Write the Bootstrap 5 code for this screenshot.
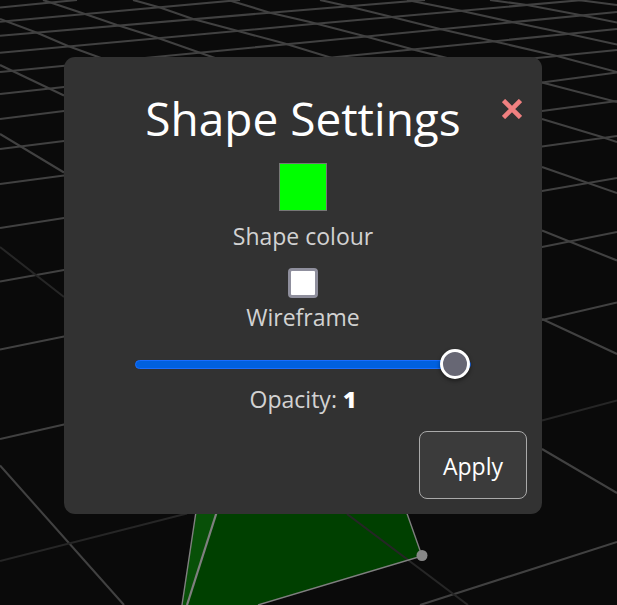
<!DOCTYPE html>
<html lang="en">
<head>
<meta charset="utf-8">
<meta name="viewport" content="width=device-width, initial-scale=1">
<title>Shape Settings</title>
<link rel="stylesheet" href="https://cdn.jsdelivr.net/npm/bootstrap@5.3.0/dist/css/bootstrap.min.css">
<style>
  body { background: #0a0a0a; color: #fff; font-family: "Open Sans", "Noto Sans", sans-serif; }
  .scene { z-index: -1; }
  .stage { padding: 57px 75px 57px 64px; }
  .settings-panel { background: #323232; border-radius: 11px; padding: 33px 15px 15px; }
  .panel-title { font-size: 46px; line-height: 56px; font-weight: 400; margin-bottom: 17px; }
  .panel-close { top: 38px; right: 16px; width: 28px; height: 28px; background: none; color: #f08080; }
  .field-label { font-size: 23px; line-height: 32px; color: #d2d2d2; }
  .field-label strong { color: #fff; font-weight: 800; }
  .swatch { appearance: none; width: 48px; height: 48px; padding: 0; border: 1px solid #777; border-radius: 0; background: none; margin-bottom: 9px; }
  .swatch::-webkit-color-swatch-wrapper { padding: 0; }
  .swatch::-webkit-color-swatch { border: 0; border-radius: 0; }
  .tick { appearance: none; width: 30px; height: 30px; border: 3px solid #8f8f9d; border-radius: 4px; background: #fff; margin-bottom: 3px; }
  .tick:checked { background: #0060df; }
  .slider { appearance: none; height: 30px; margin: 0 0 4px; background: none; }
  .slider::-webkit-slider-runnable-track { height: 9px; border: 1px solid #1a6dff; border-radius: 5px; background: #0060df; }
  .slider::-webkit-slider-thumb { -webkit-appearance: none; width: 30px; height: 30px; margin: -12px -1px 0 0; border: 3px solid #fff; border-radius: 50%; background: #676774; box-shadow: 0 2px 4px rgba(0, 0, 0, .45); }
  .apply { background: #3b3b3b; color: #fff; border: 1px solid #aaa; border-radius: 8px; font-size: 23px; line-height: 32px; padding: 18px 23px 16px; }
  .apply:hover { background: #484848; color: #fff; border-color: #ccc; }
</style>
<script src="https://cdn.jsdelivr.net/npm/bootstrap@5.3.0/dist/js/bootstrap.bundle.min.js"></script>
</head>
<body class="min-vh-100 overflow-hidden">
<svg class="scene position-fixed top-0 start-0 w-100 h-100" viewBox="0 0 617 605" preserveAspectRatio="xMidYMid slice" aria-hidden="true">
  <path fill="#004000" d="M216 505 L404 505 L422 556 L258 605 L187 605Z"/>
  <path fill="#085008" d="M197 505 L219 505 L187 605 L182 605Z"/>
  <g fill="none" stroke="#414141" stroke-width="2.1">
    <path d="M0 7.5L77 0M0 21.7L240 0M0 35.7L270 12.7L425 0M0 52.7L310 24.3L583 0M0 72L310 42L617 12M0 94L64 87L337 57L617 29M0 119L64 111L537 58L617 50M0 149L64 141L542 82.5L617 72.5M0 184L64 175.5L542 111L617 101M0 228L64 218L542 146.5L617 136M0 281.5L64 270L542 191L617 178M0 349.5L64 336.5L542 247L617 232M0 439L64 424.5L542 320L617 302.5M420 605L617 542"/>
    <path d="M578 0L617 5M490 0L527 5L580 15L617 22.5M407 0L462 11L512 22L569 34L617 44.5M320 0L347 6L392 17L440 29L497 42L557 56L617 72M228 0L270 12.7L310 22L364 36L415 50L447 58M542 82.5L617 102M133 0L160 7.5L193 19L238 31L283 43L332 58M542 119L602 137L617 142M43 0L85 14L117 25L158 38L215 58M542 167L617 193M0 19L37 32.7L68 46L101 58M542 230.5L617 260.5M0 65L64 95.5M542 319L617 354M0 134L64 172.5M542 449L617 493M0 465.5L124 605"/>
  </g>
  <path fill="none" stroke="#262626" stroke-width="2.1" d="M0 561L187 513.5M542 420.5L617 400.5M0 247L64 297M347 514L468 605"/>
  <g fill="none" stroke="#7f7f7f">
    <path stroke-width="1.4" d="M197 505L182 605M404 505L422 556L258 605"/>
    <path stroke-width="2.2" d="M219 505L187 605"/>
  </g>
  <circle cx="422" cy="555.5" r="5.5" fill="#888"/>
</svg>
<main class="stage">
  <form class="settings-panel position-relative d-flex flex-column align-items-center text-center">
    <button type="button" class="panel-close position-absolute border-0 p-0 d-flex align-items-center justify-content-center" aria-label="Close">
      <svg width="20" height="20" viewBox="0 0 20 20" aria-hidden="true"><path d="M1.5 1.5L18.5 18.5M18.5 1.5L1.5 18.5" stroke="currentColor" stroke-width="4.6" fill="none"/></svg>
    </button>
    <h1 class="panel-title">Shape Settings</h1>
    <input type="color" class="swatch d-block" id="shapeColour" value="#00ff00">
    <label class="field-label mb-3" for="shapeColour">Shape colour</label>
    <input type="checkbox" class="tick d-block" id="wireframe">
    <label class="field-label mb-3" for="wireframe">Wireframe</label>
    <input type="range" class="slider d-block w-75" id="opacity" min="0" max="1" step="0.01" value="1">
    <label class="field-label mb-3" for="opacity">Opacity: <strong>1</strong></label>
    <button type="button" class="btn apply align-self-end">Apply</button>
  </form>
</main>
</body>
</html>
